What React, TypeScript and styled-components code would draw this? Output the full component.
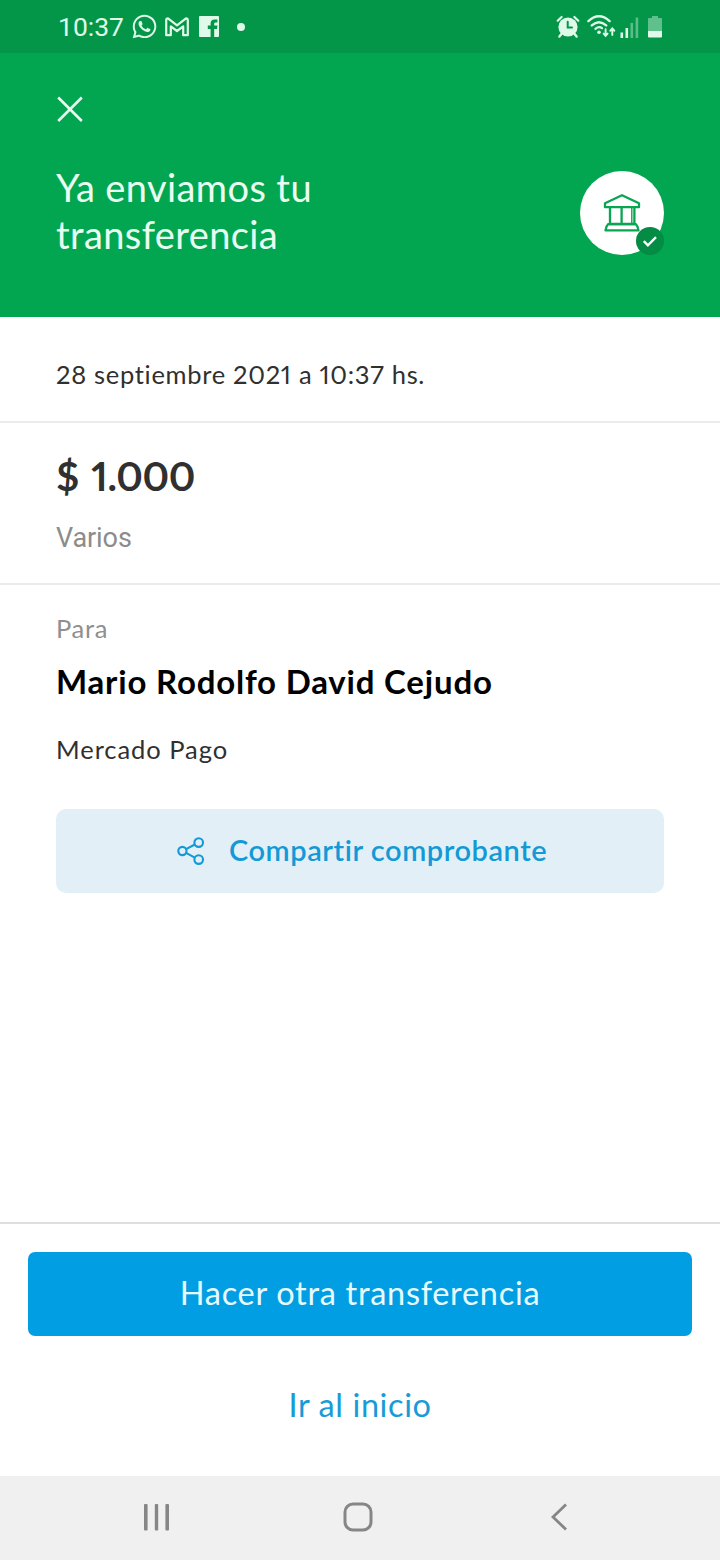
import React from "react";
import styled, { createGlobalStyle } from "styled-components";
import { FaWhatsapp } from "react-icons/fa";

const GlobalStyle = createGlobalStyle`
  *, *::before, *::after { box-sizing: border-box; }
  body {
    margin: 0;
    background: #fff;
    font-family: Lato, "Liberation Sans", sans-serif;
  }
  button { border: 0; margin: 0; padding: 0; background: none; font: inherit; }
  svg { display: block; flex: none; }
`;

const Screen = styled.div`
  width: 720px;
  height: 1560px;
  display: flex;
  flex-direction: column;
  overflow: hidden;
  background: #fff;
`;

const StatusBar = styled.div`
  height: 53px;
  flex: none;
  display: flex;
  justify-content: space-between;
  padding: 0 58px 0 58px;
  background: #039649;
  color: #e0fae9;
`;

const StatusGroup = styled.div`
  display: flex;
  align-items: center;
  height: 53px;
`;

const Clock = styled.span`
  font: 400 26.5px/30px Roboto, sans-serif;
  width: 73px;
`;

const Header = styled.header`
  height: 264px;
  flex: none;
  background: #03a650;
  color: #e9fff2;
  padding: 41px 56px 0;
`;

const CloseButton = styled.button`
  display: block;
  width: 30px;
  height: 30px;
  color: inherit;
`;

const HeaderRow = styled.div`
  display: flex;
  justify-content: space-between;
  align-items: flex-start;
  margin-top: 40px;
`;

const Title = styled.h1`
  margin: 0;
  width: 300px;
  font-size: 38px;
  font-weight: 400;
  line-height: 47px;
  letter-spacing: 0.4px;
`;

const Avatar = styled.div`
  position: relative;
  display: flex;
  align-items: center;
  justify-content: center;
  width: 84px;
  height: 84px;
  margin-top: 7px;
  border-radius: 50%;
  background: #fff;
`;

const Badge = styled.div`
  position: absolute;
  right: 0;
  bottom: 0;
  width: 28px;
  height: 28px;
  border-radius: 50%;
  background: #048b44;
`;

const Section = styled.section<{ $height: number; $top: number; $line?: boolean }>`
  height: ${(p) => p.$height}px;
  padding: ${(p) => p.$top}px 56px 0;
  flex: none;
  border-bottom: ${(p) => (p.$line ? "2px solid #ebebeb" : "0")};
`;

const Text = styled.p<{ $color?: string; $spacing?: number; $gap?: number }>`
  margin: ${(p) => p.$gap ?? 0}px 0 0;
  font-size: 25.5px;
  line-height: 32px;
  white-space: nowrap;
  font-variant-numeric: proportional-nums;
  letter-spacing: ${(p) => p.$spacing ?? 0.7}px;
  color: ${(p) => p.$color ?? "#303030"};
`;

const Amount = styled.p`
  margin: 0;
  font-size: 40px;
  font-weight: 700;
  line-height: 48px;
  font-variant-numeric: proportional-nums;
  letter-spacing: -0.4px;
  word-spacing: 3px;
  color: #303030;
`;

const Note = styled.p`
  margin: 22px 0 0;
  font: 400 27px/32px Roboto, sans-serif;
  letter-spacing: -0.1px;
  color: #8c8c8c;
`;

const Recipient = styled.h2`
  margin: 17px 0 0;
  font-size: 33px;
  font-weight: 700;
  line-height: 40px;
  letter-spacing: 0.8px;
  white-space: nowrap;
  color: #000;
`;

const ShareButton = styled.button`
  display: flex;
  align-items: center;
  width: 608px;
  height: 84px;
  margin-top: 44px;
  padding-left: 120px;
  gap: 23px;
  border-radius: 10px;
  background: #e2eff7;
  color: #139ad6;
`;

const ShareLabel = styled.span`
  font-size: 29px;
  font-weight: 600;
  line-height: 36px;
  letter-spacing: 0.55px;
  white-space: nowrap;
  padding-bottom: 2px;
`;

const Footer = styled.footer`
  margin-top: auto;
  height: 254px;
  flex: none;
  border-top: 2px solid #dedede;
  padding: 28px 28px 0;
`;

const Action = styled.button<{ $primary?: boolean }>`
  display: block;
  width: 100%;
  height: 84px;
  border-radius: 7px;
  font-size: 32.5px;
  line-height: 82px;
  padding-bottom: 2px;
  letter-spacing: ${(p) => (p.$primary ? 0.7 : 0.6)}px;
  background: ${(p) => (p.$primary ? "#029ee3" : "transparent")};
  color: ${(p) => (p.$primary ? "#e6fbff" : "#189bd6")};
  margin-top: ${(p) => (p.$primary ? 0 : 28)}px;
`;

const NavBar = styled.nav`
  height: 84px;
  flex: none;
  display: flex;
  align-items: center;
  justify-content: space-between;
  padding: 0 142px 2px;
  background: #f0f0f0;
  color: #868686;
`;

const MailIcon = () => (
  <svg width="24" height="20" viewBox="0 0 24 20" fill="none" stroke="currentColor" strokeWidth="2.2" strokeLinejoin="round">
    <path d="M1.2 18.2V3.2Q1.2 1.3 3 1.3L12 8.4L21 1.3Q22.8 1.3 22.8 3.2V18.2H18.2V9.4L12 14L5.8 9.4V18.2Z" />
  </svg>
);

const FacebookIcon = () => (
  <svg width="20" height="21" viewBox="0 0 20 21">
    <path
      fill="currentColor"
      fillRule="evenodd"
      d="M1 0H19Q20 0 20 1V20Q20 21 19 21H15.2V13H18L18.5 9.6H15.2V7.7Q15.2 6.4 16.6 6.4H18.4V3.4H15.7Q11.6 3.4 11.6 7.4V9.6H8.8V13H11.6V21H1Q0 21 0 20V1Q0 0 1 0Z"
    />
  </svg>
);

const AlarmIcon = () => (
  <svg width="24" height="24" viewBox="0 0 24 24" fill="none" stroke="currentColor" strokeLinecap="round">
    <circle cx="12" cy="12" r="9.6" fill="currentColor" stroke="none" />
    <path d="M1.7 5.7L5.6 2M22.3 5.7L18.4 2" strokeWidth="2.2" />
    <path d="M5.8 18.6L3.4 21.6M18.2 18.6L20.6 21.6" strokeWidth="2.4" />
    <path d="M11.7 6.8V12.5H16" stroke="#039649" strokeWidth="2" />
  </svg>
);

const WifiIcon = () => (
  <svg width="29" height="23" viewBox="0 0 29 23" fill="none" stroke="currentColor" strokeLinecap="round">
    <path d="M1.4 6.1Q12 -3.5 22.6 6.1M4.8 10.4Q12 3.9 19.2 10.4" strokeWidth="2.4" />
    <path d="M8.4 13.8Q12 11 15 13.2" strokeWidth="2.2" />
    <circle cx="12" cy="17.2" r="1.8" fill="currentColor" stroke="none" />
    <path d="M18.6 14.2V20.6M16.6 18.6L18.6 20.8L20.6 18.6M25.3 20V13.6M23.3 15.7L25.3 13.4L27.3 15.7" strokeWidth="1.9" />
  </svg>
);

const SignalIcon = () => (
  <svg width="19" height="21" viewBox="0 0 19 21" fill="currentColor">
    <rect x="0.5" y="15.5" width="2.6" height="5.5" />
    <rect x="5.5" y="11" width="2.6" height="10" />
    <rect x="10.5" y="6" width="2.6" height="15" opacity="0.4" />
    <rect x="15.6" y="0.5" width="2.6" height="20.5" opacity="0.4" />
  </svg>
);

const BatteryIcon = () => (
  <svg width="14" height="22" viewBox="0 0 14 22" fill="currentColor">
    <path d="M4 0H10V2H13Q14 2 14 3V15H0V3Q0 2 1 2H4Z" opacity="0.42" />
    <path d="M0 15H14V20.5Q14 21.5 13 21.5H1Q0 21.5 0 20.5Z" />
  </svg>
);

const BankIcon = () => (
  <svg width="38" height="40" viewBox="0 0 38 40" fill="none" stroke="#0aa552" strokeWidth="2.3" strokeLinejoin="round">
    <path d="M2 14.2V10.2L19 2.2L36 10.2V14.2Z" />
    <path d="M7 14.5V31M18.6 14.5V31M31.4 14.5V31M6 31H32" />
    <path d="M28.8 15V31" strokeWidth="1.4" />
    <path d="M5.2 31.2H32.8Q35 33.2 35.5 37.4H2.5Q3 33.2 5.2 31.2Z" />
  </svg>
);

const ShareIcon = () => (
  <svg width="30" height="30" viewBox="0 0 30 30" fill="none" stroke="currentColor" strokeWidth="2.1">
    <circle cx="6.4" cy="15" r="4.1" />
    <circle cx="22.7" cy="6.6" r="4.3" />
    <circle cx="22.7" cy="23.6" r="4.3" />
    <path d="M10.1 13.1L18.8 8.5M10.1 16.9L18.8 21.6" />
  </svg>
);

const AlarmSlot = styled.div`
  margin-right: 7px;
`;
const WifiSlot = styled.div`
  margin-right: 4px;
`;
const SignalSlot = styled.div`
  margin-right: 9px;
  padding-top: 2px;
`;
const AppIcons = styled.div`
  display: flex;
  align-items: center;
  height: 53px;
`;
const MailSlot = styled.div`
  margin: 0 10px 0 7px;
`;
const Dot = styled.i`
  width: 8px;
  height: 8px;
  margin-left: 18px;
  border-radius: 50%;
  background: currentColor;
`;
const HomeSlot = styled.div`
  margin-right: 6px;
`;

export default function App() {
  return (
    <>
      <GlobalStyle />
      <Screen>
        <StatusBar>
          <StatusGroup>
            <Clock>10:37</Clock>
            <AppIcons>
              <FaWhatsapp size={27} />
              <MailSlot><MailIcon /></MailSlot>
              <FacebookIcon />
              <Dot />
            </AppIcons>
          </StatusGroup>
          <StatusGroup>
            <AlarmSlot><AlarmIcon /></AlarmSlot>
            <WifiSlot><WifiIcon /></WifiSlot>
            <SignalSlot><SignalIcon /></SignalSlot>
            <BatteryIcon />
          </StatusGroup>
        </StatusBar>

        <Header>
          <CloseButton aria-label="Cerrar">
            <svg width="28" height="30" viewBox="0 0 28 30" fill="none" stroke="currentColor" strokeWidth="2.6">
              <path d="M2.2 3.5L25.8 27M25.8 3.5L2.2 27" />
            </svg>
          </CloseButton>
          <HeaderRow>
            <Title>Ya enviamos tu transferencia</Title>
            <Avatar>
              <BankIcon />
              <Badge>
                <svg width="28" height="28" viewBox="0 0 28 28" fill="none" stroke="#fff" strokeWidth="2.4">
                  <path d="M7.8 14.2L11.9 18.4L20 10.2" />
                </svg>
              </Badge>
            </Avatar>
          </HeaderRow>
        </Header>

        <Section $height={106} $top={41} $line>
          <Text>28 septiembre 2021 a 10:37 hs.</Text>
        </Section>
        <Section $height={162} $top={29} $line>
          <Amount>$ 1.000</Amount>
          <Note>Varios</Note>
        </Section>
        <Section $height={400} $top={27}>
          <Text $color="#8f8f8f">Para</Text>
          <Recipient>Mario Rodolfo David Cejudo</Recipient>
          <Text $gap={32} $spacing={0.95}>Mercado Pago</Text>
          <ShareButton>
            <ShareIcon />
            <ShareLabel>Compartir comprobante</ShareLabel>
          </ShareButton>
        </Section>

        <Footer>
          <Action $primary>Hacer otra transferencia</Action>
          <Action>Ir al inicio</Action>
        </Footer>

        <NavBar>
          <svg width="29" height="28" viewBox="0 0 29 28" fill="currentColor">
            <rect x="2" y="1" width="3.6" height="26.5" rx="1" />
            <rect x="12.8" y="1" width="3.4" height="26.5" rx="1" />
            <rect x="23.4" y="1" width="3.6" height="26.5" rx="1" />
          </svg>
          <HomeSlot>
            <svg width="30" height="30" viewBox="0 0 30 30" fill="none" stroke="currentColor" strokeWidth="3">
              <rect x="2" y="2" width="26" height="26" rx="8" />
            </svg>
          </HomeSlot>
          <svg width="28" height="28" viewBox="0 0 28 28" fill="none" stroke="currentColor" strokeWidth="2.8">
            <path d="M16 1.5L3 14L16 26.5" />
          </svg>
        </NavBar>
      </Screen>
    </>
  );
}
